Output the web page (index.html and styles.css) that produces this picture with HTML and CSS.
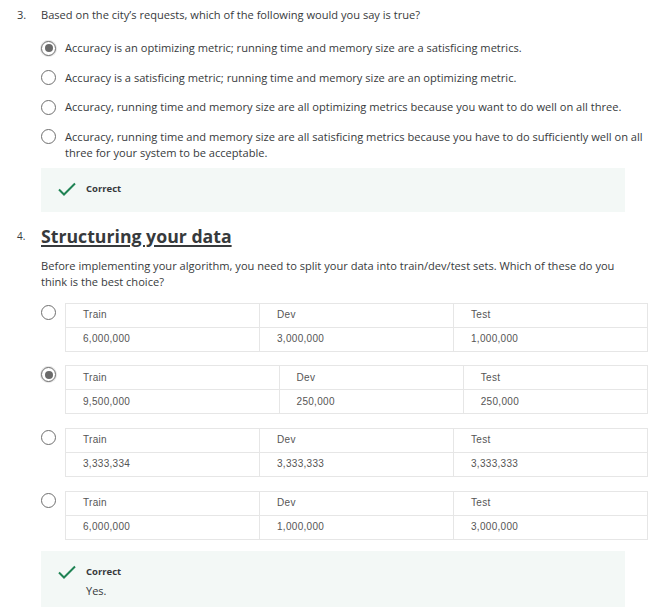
FILE: index.html
```html
<!DOCTYPE html>
<html>
<head>
<meta charset="utf-8">
<link rel="stylesheet" href="styles.css">
</head>
<body>
<div class="question q3">
  <div class="num">3.</div>
  <div class="body">
    <div class="prompt">Based on the city’s requests, which of the following would you say is true?</div>
    <div class="options">
      <div class="option"><span class="radio checked"></span><span class="label">Accuracy is an optimizing metric; running time and memory size are a satisficing metrics.</span></div>
      <div class="option"><span class="radio"></span><span class="label">Accuracy is a satisficing metric; running time and memory size are an optimizing metric.</span></div>
      <div class="option"><span class="radio"></span><span class="label">Accuracy, running time and memory size are all optimizing metrics because you want to do well on all three.</span></div>
      <div class="option"><span class="radio"></span><span class="label">Accuracy, running time and memory size are all satisficing metrics because you have to do sufficiently well on all three for your system to be acceptable.</span></div>
    </div>
    <div class="feedback">
      <svg class="check" width="18" height="14" viewBox="0 0 18 14"><path d="M1 7.5 L6 12.5 L17 1.5" fill="none" stroke="#1f8354" stroke-width="2"/></svg>
      <div class="fb-text"><div class="fb-title">Correct</div></div>
    </div>
  </div>
</div>

<div class="question q4">
  <div class="num small">4.</div>
  <div class="body">
    <h2 class="title">Structuring your data</h2>
    <p class="desc">Before implementing your algorithm, you need to split your data into train/dev/test sets. Which of these do you think is the best choice?</p>
    <div class="table-options">
      <div class="t-option">
        <span class="radio"></span>
        <table class="split"><tr><td>Train</td><td>Dev</td><td>Test</td></tr><tr><td>6,000,000</td><td>3,000,000</td><td>1,000,000</td></tr></table>
      </div>
      <div class="t-option">
        <span class="radio checked"></span>
        <table class="split"><tr><td>Train</td><td>Dev</td><td>Test</td></tr><tr><td>9,500,000</td><td>250,000</td><td>250,000</td></tr></table>
      </div>
      <div class="t-option">
        <span class="radio"></span>
        <table class="split"><tr><td>Train</td><td>Dev</td><td>Test</td></tr><tr><td>3,333,334</td><td>3,333,333</td><td>3,333,333</td></tr></table>
      </div>
      <div class="t-option">
        <span class="radio"></span>
        <table class="split"><tr><td>Train</td><td>Dev</td><td>Test</td></tr><tr><td>6,000,000</td><td>1,000,000</td><td>3,000,000</td></tr></table>
      </div>
    </div>
    <div class="feedback fb2">
      <svg class="check" width="18" height="14" viewBox="0 0 18 14"><path d="M1 7.5 L6 12.5 L17 1.5" fill="none" stroke="#1f8354" stroke-width="2"/></svg>
      <div class="fb-text"><div class="fb-title">Correct</div><div class="fb-body">Yes.</div></div>
    </div>
  </div>
</div>
</body>
</html>
```

FILE: styles.css
```css
* { box-sizing: border-box; }
html, body { background: #fff; }
body {
  margin: 0;
  font-family: "Open Sans", "DejaVu Sans", sans-serif;
  font-size: 11.1px;
  line-height: 16px;
  color: #373a3c;
  width: 655px;
  overflow: hidden;
}
.question {
  display: grid;
  grid-template-columns: 41px 584px;
}
.q3 { padding-top: 7px; }
.num {
  padding-left: 17px;
  color: #373a3c;
}
.num.small {
  font-size: 10px;
  line-height: 24px;
}
.prompt { color: #373a3c; }
.options {
  margin-top: 17px;
  display: flex;
  flex-direction: column;
  gap: 13.5px;
  width: 614px;
}
.option {
  display: flex;
  align-items: flex-start;
  gap: 9px;
}
.label { color: #373a3c; }
.radio {
  flex: none;
  width: 15px;
  height: 15px;
  border: 1.5px solid #6f6f6f;
  border-radius: 50%;
  background: #fff;
  display: flex;
  align-items: center;
  justify-content: center;
  margin-top: 0.5px;
}
.radio.checked {
  box-shadow: 0 0 0 1px #e4e4e4;
}
.radio.checked::after {
  content: "";
  width: 8px;
  height: 8px;
  border-radius: 50%;
  background: #6a6a6a;
}
.feedback {
  margin-top: 7px;
  background: #f3f8f6;
  display: flex;
  align-items: flex-start;
  gap: 10px;
  padding: 13px 0 15px 17px;
}
.check { flex: none; margin-top: 1px; }
.fb-title {
  font-weight: 700;
  font-size: 9.5px;
  color: #373a3c;
}
.fb-body {
  margin-top: 3px;
  font-size: 11px;
}
.q4 { margin-top: 12px; }
.title {
  margin: 0;
  font-size: 17.7px;
  line-height: 24px;
  font-weight: 700;
  color: #373a3c;
  text-decoration: underline;
  text-underline-offset: 2px;
  text-decoration-thickness: 1.5px;
}
.desc {
  margin: 10px 0 0;
  width: 590px;
}
.table-options {
  margin-top: 13px;
  display: flex;
  flex-direction: column;
  gap: 13.7px;
  width: 607px;
}
.t-option {
  display: flex;
  align-items: flex-start;
  gap: 9px;
}
.t-option .radio { margin-top: 2px; }
.split {
  flex: 1;
  width: 100%;
  border-collapse: collapse;
  font-family: "Liberation Sans", Arial, sans-serif;
  font-size: 10px;
  letter-spacing: 0.3px;
  color: #555;
}
.split td {
  border: 1px solid #e6e6e6;
  height: 24px;
  padding: 0 0 0 17px;
  line-height: 14px;
  vertical-align: middle;
}
.fb2 {
  margin-top: 11px;
  padding-bottom: 14px;
}
```
